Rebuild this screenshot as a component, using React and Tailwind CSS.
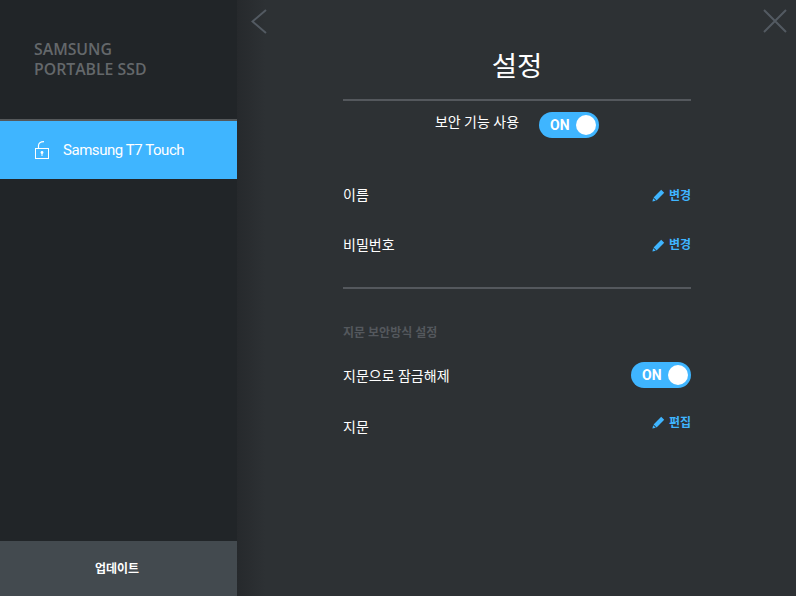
const Pencil = () => (
    <svg width="13" height="13" viewBox="0 0 13 13" className="shrink-0">
        <path d="M9.2 0.8 L12.2 3.8 L4.6 11.4 L1.6 8.4 Z" fill="#3fb5ff" />
        <path d="M1.2 9.2 L3.8 11.8 L0.4 12.6 Z" fill="#3fb5ff" />
    </svg>
);

const Toggle = () => (
    <div className="w-[60px] h-[26px] rounded-full bg-[#3fb5ff] flex items-center justify-between pl-[11px] pr-[3px]">
        <span className="text-[14px] font-bold leading-none text-white font-['Roboto',sans-serif]">ON</span>
        <span className="w-[20px] h-[20px] rounded-full bg-white" />
    </div>
);

const EditLink = ({ label }) => (
    <div className="flex items-center gap-[4px] text-[12px] font-bold text-[#3fb5ff] leading-none">
        <Pencil />
        <span>{label}</span>
    </div>
);

export default function App() {
    return (
        <div className="flex w-[796px] h-[596px] overflow-hidden bg-[#2d3134] text-white font-['Roboto','Noto_Sans_CJK_KR',sans-serif]">
            <div className="w-[237px] shrink-0 flex flex-col bg-[#212528]">
                <div className="h-[119px] pl-[34px] pt-[39px] text-[15.8px] font-semibold leading-[20px] text-[#64686b] font-['Open_Sans','Noto_Sans_CJK_KR',sans-serif]">
                    <div>SAMSUNG</div>
                    <div>PORTABLE SSD</div>
                </div>
                <div className="h-[2px] bg-[#55585a]" />
                <div className="h-[58px] bg-[#3fb5ff] flex items-center pl-[35px] gap-[14px]">
                    <svg width="14" height="18" viewBox="0 0 14 18" fill="none" stroke="white" strokeWidth="1">
                        <rect x="0.5" y="7.5" width="13" height="10" />
                        <path d="M3.5 7.5 V4.5 Q3.5 0.7 9 0.7" strokeWidth="1.2" />
                        <circle cx="7" cy="11.5" r="1.4" fill="white" stroke="none" />
                        <path d="M7 12 V15" />
                    </svg>
                    <span className="text-[15px] leading-none tracking-[-0.45px]">Samsung T7 Touch</span>
                </div>
                <div className="flex-1" />
                <div className="h-[55px] bg-[#434a4f] flex items-center justify-center pr-[3px] pt-[1px] text-[12px] font-bold">
                    업데이트
                </div>
            </div>

            <div className="flex-1 flex flex-col bg-gradient-to-r from-[#26292c] via-[#2d3134] via-[5%] to-[#2d3134]">
                <div className="h-[44px] flex justify-between items-start pt-[9px] pl-[14px] pr-[9px]">
                    <svg width="16" height="25" viewBox="0 0 16 25" fill="none" stroke="#535a62" strokeWidth="2">
                        <path d="M15 1 L1.5 12.5 L15 24" />
                    </svg>
                    <svg width="24" height="24" viewBox="0 0 24 24" fill="none" stroke="#535a62" strokeWidth="2">
                        <path d="M1 1 L23 23 M23 1 L1 23" />
                    </svg>
                </div>

                <div className="w-[348px] ml-[106px] flex flex-col">
                    <h1 className="text-[27.5px] leading-[46px] text-center font-normal mb-[9px]">설정</h1>
                    <div className="h-[2px] bg-[#54585d]" />

                    <div className="flex items-center justify-center gap-[20px] mt-[11px] h-[26px] text-[14px]">
                        <span className="-mt-[6px]">보안 기능 사용</span>
                        <Toggle />
                    </div>

                    <div className="flex justify-between items-center mt-[45px] h-[24px] text-[14px]">
                        <span>이름</span>
                        <div className="mt-[1px]"><EditLink label="변경" /></div>
                    </div>
                    <div className="flex justify-between items-center mt-[26px] h-[24px] text-[14px]">
                        <span>비밀번호</span>
                        <EditLink label="변경" />
                    </div>

                    <div className="h-[2px] bg-[#54585d] mt-[30px]" />

                    <div className="mt-[36px] text-[12px] font-bold leading-[16px] text-[#54585d]">지문 보안방식 설정</div>

                    <div className="flex justify-between items-center mt-[21px] h-[26px] text-[14px]">
                        <span className="mt-[2px]">지문으로 잠금해제</span>
                        <Toggle />
                    </div>
                    <div className="flex justify-between items-start mt-[26px] text-[14px]">
                        <span className="leading-[22px] pt-[2px]">지문</span>
                        <div className="mt-[2px]"><EditLink label="편집" /></div>
                    </div>
                </div>
            </div>
        </div>
    );
}
